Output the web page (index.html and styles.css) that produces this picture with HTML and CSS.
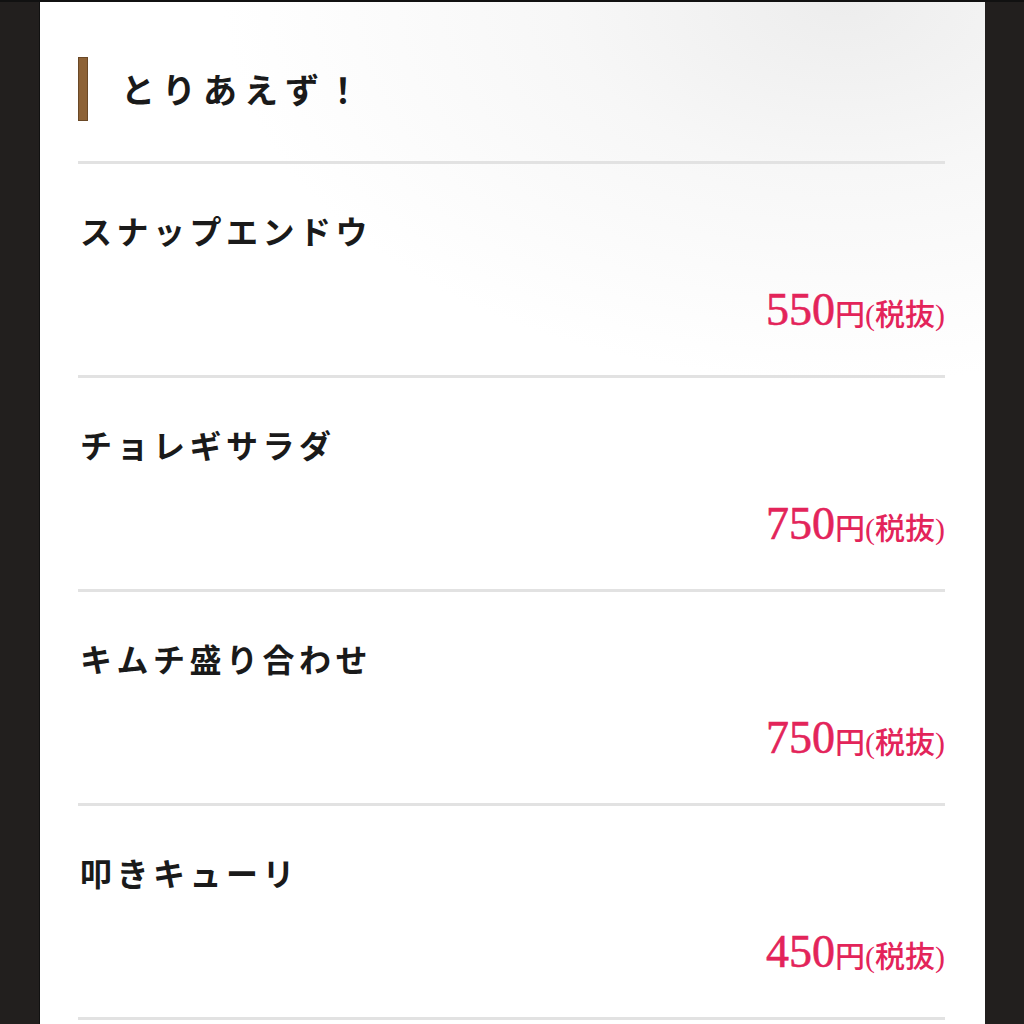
FILE: index.html
```html
<!DOCTYPE html>
<html lang="ja">
<head>
    <meta charset="UTF-8">
    <meta name="viewport" content="width=device-width, initial-scale=1.0">
    <title>とりあえず！</title>
    <link rel="stylesheet" href="styles.css">
</head>
<body>
    <div class="page">
        <div class="menu-card">
            <h2 class="menu-title">とりあえず！</h2>

            <div class="menu-item">
                <p class="item-name">スナップエンドウ</p>
                <p class="item-price"><span class="num">550</span>円(税抜)</p>
            </div>
            <div class="menu-item">
                <p class="item-name">チョレギサラダ</p>
                <p class="item-price"><span class="num">750</span>円(税抜)</p>
            </div>
            <div class="menu-item">
                <p class="item-name">キムチ盛り合わせ</p>
                <p class="item-price"><span class="num">750</span>円(税抜)</p>
            </div>
            <div class="menu-item">
                <p class="item-name">叩きキューリ</p>
                <p class="item-price"><span class="num">450</span>円(税抜)</p>
            </div>
            <div class="menu-item last"></div>
        </div>
    </div>
</body>
</html>
```

FILE: styles.css
```css
html, body {
    margin: 0;
    padding: 0;
    height: 100%;
    overflow: hidden;
}
body {
    background-color: #221f1e;
    font-family: "Liberation Serif", "Noto Sans CJK JP", serif;
    color: #1a1a1a;
}
.page {
    border-top: 2px solid #111;
    height: 1022px;
    overflow: hidden;
}
.menu-card {
    margin: 0 39px;
    padding: 0 40px 0 38px;
    height: 100%;
    background: radial-gradient(ellipse 620px 380px at 85% 0%, #ededed 0%, #f7f7f7 45%, #ffffff 100%);
    background-color: #fff;
    border-left: 1px solid #111;
}
.menu-title {
    margin: 0;
    padding: 55px 0 40px 43px;
    font-family: "Noto Sans CJK JP", sans-serif;
    font-weight: 700;
    font-size: 34px;
    letter-spacing: 7px;
    line-height: 64px;
    position: relative;
}
.menu-title::before {
    content: "";
    position: absolute;
    left: 0;
    top: 55px;
    width: 8px;
    height: 62px;
    background-color: #8d6236;
    border: 1px solid #6a4826;
}
.menu-item {
    border-top: 3px solid #e2e2e2;
    height: 211px;
}
.menu-item.last {
    height: 10px;
}
.item-name {
    margin: 0;
    padding: 44px 0 0 2px;
    font-family: "Noto Sans CJK JP", sans-serif;
    font-weight: 700;
    font-size: 32px;
    letter-spacing: 4.5px;
    line-height: 44px;
}
.item-price {
    margin: 0;
    padding-top: 33px;
    text-align: right;
    color: #e3245a;
    font-family: "Liberation Serif", "Noto Sans CJK JP", serif;
    font-size: 30px;
    font-weight: 500;
    line-height: 50px;
}
.item-price .num {
    font-size: 46px;
    -webkit-text-stroke: 0.6px #e3245a;
}
```
